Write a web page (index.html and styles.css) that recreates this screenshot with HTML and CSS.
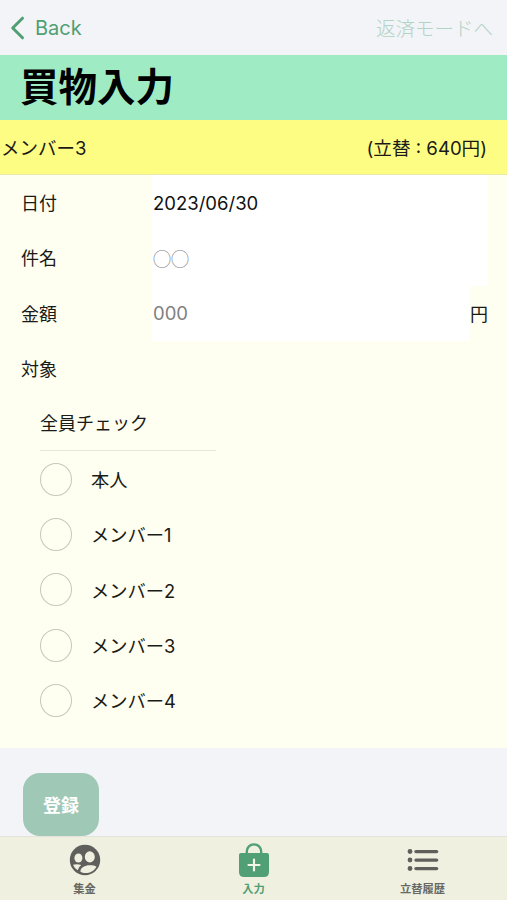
FILE: index.html
```
<!DOCTYPE html>
<html lang="ja">
<head>
    <meta charset="UTF-8">
    <meta name="viewport" content="width=device-width, initial-scale=1.0">
    <title>買物入力</title>
    <link rel="stylesheet" href="styles.css">
</head>
<body>

    <!-- NAV BAR -->
    <header class="navbar">
        <a class="back">
            <svg class="back-icon" width="15" height="24" viewBox="0 0 15 24">
                <path d="M12.5 2.2 L2.7 12 L12.5 21.8" />
            </svg>
            <span>Back</span>
        </a>
        <a class="mode-link">返済モードへ</a>
    </header>

    <h1 class="title">買物入力</h1>

    <div class="member-bar">
        <span class="member-name">メンバー3</span>
        <span>(立替 : 640円)</span>
    </div>

    <!-- INPUT FORM -->
    <main class="form">
        <div class="row">
            <label>日付</label>
            <input type="text" value="2023/06/30">
        </div>
        <div class="row">
            <label>件名</label>
            <input class="subject" type="text" placeholder="◯◯">
        </div>
        <div class="row">
            <label>金額</label>
            <input type="text" placeholder="000">
            <span class="unit">円</span>
        </div>
        <div class="row">
            <label>対象</label>
        </div>

        <div class="targets">
            <div class="check-all">全員チェック</div>
            <div class="target"><span class="circle"></span>本人</div>
            <div class="target"><span class="circle"></span>メンバー1</div>
            <div class="target"><span class="circle"></span>メンバー2</div>
            <div class="target"><span class="circle"></span>メンバー3</div>
            <div class="target"><span class="circle"></span>メンバー4</div>
        </div>
    </main>

    <div class="submit-area">
        <button class="btn">登録</button>
    </div>

    <!-- TAB BAR -->
    <nav class="tabbar">
        <a class="tab">
            <svg width="32" height="34" viewBox="0 0 32 34">
                <circle cx="16" cy="17" r="15.2" fill="#5f5f5b" />
                <g fill="#f0f0e1">
                    <ellipse cx="9.4" cy="15" rx="4" ry="4.5" />
                    <ellipse cx="20.8" cy="13.9" rx="5" ry="5.6" />
                    <path d="M4 21.7 Q8 20.6 12.2 21.9 Q9.5 23.8 8.7 27.3 Q5.2 25 4 21.7 Z" />
                    <path d="M11.3 28.5 C11.8 24.6 15.5 22.3 20.8 22.3 C23.6 22.3 26 22.8 27.5 23.7 C25 28 21 30 16.5 30 C14.5 30 12.8 29.5 11.3 28.5 Z" />
                </g>
            </svg>
            <span>集金</span>
        </a>
        <a class="tab active">
            <svg width="32" height="34" viewBox="0 0 32 34">
                <path d="M8.8 11 V8.5 C8.8 4.2 12 1.4 16 1.4 C20 1.4 23.2 4.2 23.2 8.5 V11" fill="none" stroke="#509f75" stroke-width="2.4" />
                <path d="M3 10 H29 Q31 10 31 12 V29 Q31 34 26 34 H6 Q1 34 1 29 V12 Q1 10 3 10 Z" fill="#509f75" />
                <path d="M16 16.5 V27.5 M10.5 22 H21.5" fill="none" stroke="#f4f6e8" stroke-width="2.2" stroke-linecap="round" />
            </svg>
            <span>入力</span>
        </a>
        <a class="tab">
            <svg width="32" height="34" viewBox="0 0 32 34">
                <g fill="#5f5f5b">
                    <circle cx="3" cy="8.5" r="2.4" />
                    <circle cx="3" cy="17" r="2.4" />
                    <circle cx="3" cy="25.5" r="2.4" />
                    <rect x="7.3" y="6.9" width="24" height="3.3" rx="1.6" />
                    <rect x="7.3" y="15.4" width="24" height="3.3" rx="1.6" />
                    <rect x="7.3" y="23.9" width="24" height="3.3" rx="1.6" />
                </g>
            </svg>
            <span>立替履歴</span>
        </a>
    </nav>

</body>
</html>
```

FILE: styles.css
```
* {
    margin: 0;
    padding: 0;
    box-sizing: border-box;
    font-family: Inter, "Noto Sans CJK JP", sans-serif;
}

body {
    display: flex;
    flex-direction: column;
    height: 100vh;
    background: #f3f4f7;
    color: #1a1a16;
    font-size: 18px;
    overflow: hidden;
}

/* NAV BAR */
.navbar {
    display: flex;
    justify-content: space-between;
    align-items: center;
    height: 55px;
    padding: 0 14px 0 10px;
}

.back {
    display: flex;
    align-items: center;
    gap: 10px;
    color: #509f75;
    font-size: 20px;
}

.back-icon {
    fill: none;
    stroke: #509f75;
    stroke-width: 3;
    stroke-linecap: round;
    stroke-linejoin: round;
}

.mode-link {
    padding-bottom: 1px;
    color: #b3d3c6;
    font-size: 19.5px;
    font-weight: 300;
}

.title {
    height: 65px;
    padding-left: 20px;
    background: #9eebc4;
    color: #000;
    font-size: 38.5px;
    line-height: 64px;
}

.member-bar {
    display: flex;
    justify-content: space-between;
    align-items: center;
    height: 55px;
    padding: 0 20px 1px 1px;
    background: #fefd83;
    border-bottom: 1px solid #e9e9a8;
    font-size: 18.6px;
}

.member-name { font-size: 18.5px; }

/* FORM */
.form {
    height: 573px;
    background: #fefff0;
}

.row {
    display: flex;
    align-items: center;
    height: 55.3px;
    padding: 0 19px 0 21px;
}

.row label {
    width: 131px;
    padding-bottom: 1px;
}

.row input {
    flex: 1;
    min-width: 0;
    height: 100%;
    padding-left: 1px;
    border: none;
    outline: none;
    background: #fff;
    color: #111;
    font-size: 18.5px;
}

.row input::placeholder { color: #808080; }

/* full-width circles need the Japanese glyphs */
.row .subject {
    font-family: "Noto Sans CJK JP", sans-serif;
    font-size: 18px;
}

.unit { padding-bottom: 1px; }

.targets { padding-left: 40px; }

.check-all {
    width: 176px;
    height: 55.3px;
    border-bottom: 1px solid #e6e7dc;
    line-height: 56px;
}

.target {
    display: flex;
    align-items: center;
    gap: 19px;
    height: 55.3px;
    font-size: 18.3px;
}

.circle {
    width: 32px;
    height: 33px;
    border: 1.5px solid #c6c7bb;
    border-radius: 50%;
}

.submit-area {
    flex: 1;
    padding: 25px 23px 0;
}

.btn {
    width: 76px;
    height: 63px;
    padding-bottom: 2px;
    border: none;
    border-radius: 17px;
    background: #9fc8b6;
    color: #fff;
    font-size: 18px;
    font-weight: bold;
}

/* TAB BAR */
.tabbar {
    display: flex;
    height: 64px;
    background: #f0f0e1;
    border-top: 1px solid #e4e4dc;
}

.tab {
    flex: 1;
    display: flex;
    flex-direction: column;
    align-items: center;
    padding-top: 6px;
    color: #686862;
    font-size: 11.3px;
    font-weight: bold;
    line-height: 16px;
}

.tab svg {
    height: 34px;
    margin-bottom: 4px;
}

.tab.active { color: #509f75; }
```
